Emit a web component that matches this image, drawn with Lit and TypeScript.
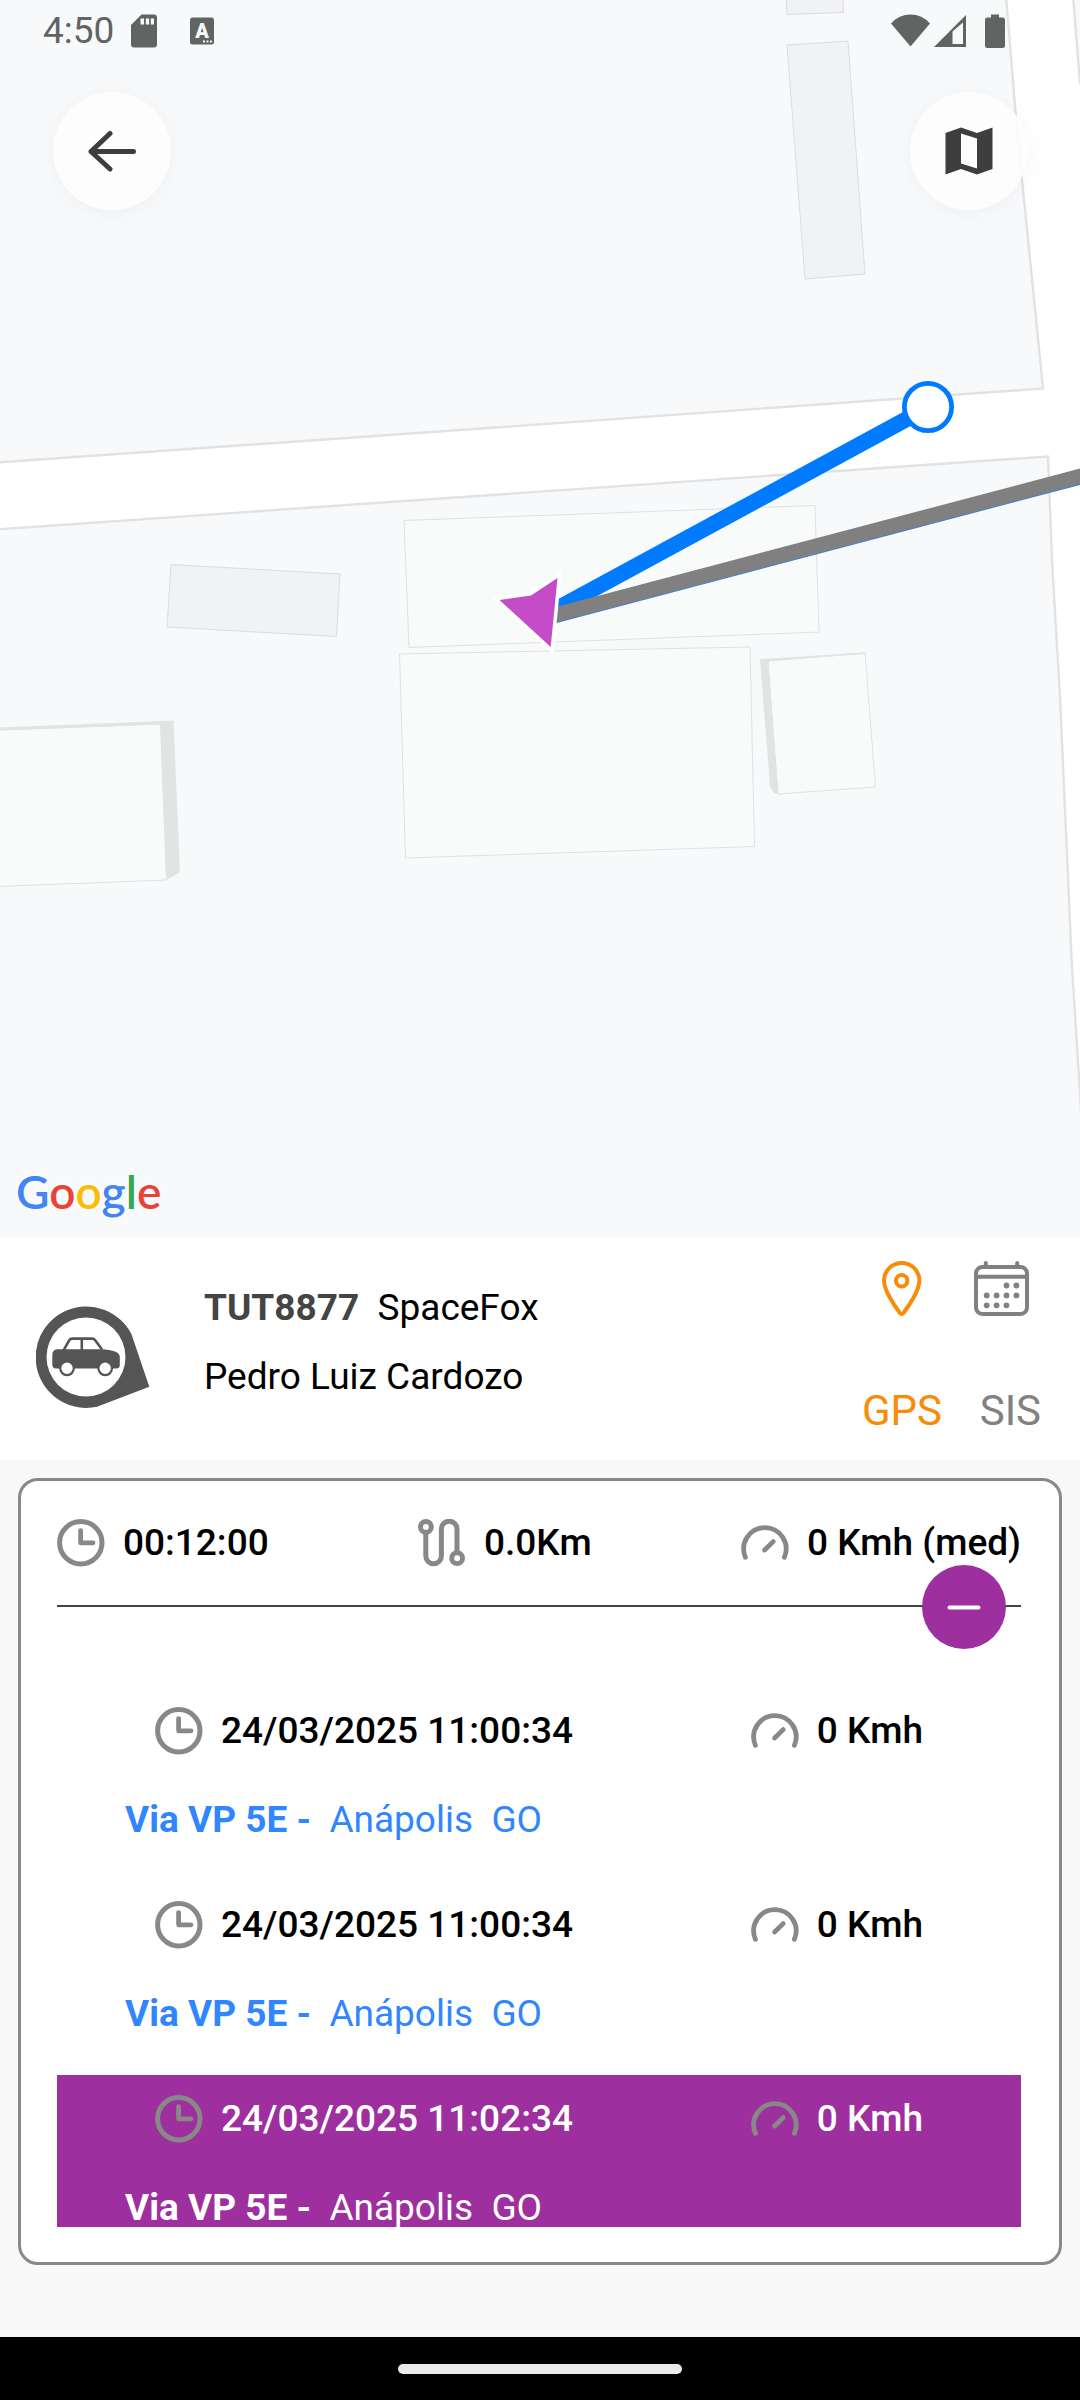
import { LitElement, html, svg, css, nothing } from "lit";
import { customElement, property, state } from "lit/decorators.js";
import { classMap } from "lit/directives/class-map.js";

interface Position {
  time: string;
  speed: string;
  street: string;
  city: string;
  active: boolean;
}

const clockIcon = html`<svg class="icon" viewBox="0 0 48 48" aria-hidden="true">
  <g fill="none" stroke="#888" stroke-linecap="round" stroke-linejoin="round">
    <circle cx="23.8" cy="23.8" r="21.2" stroke-width="5" />
    <path d="M23.6 11.6V23.8H36" stroke-width="4.8" />
  </g>
</svg>`;

const routeIcon = html`<svg class="icon" viewBox="0 0 48 48" aria-hidden="true">
  <g fill="none" stroke="#888" stroke-width="5">
    <circle cx="7.9" cy="7.9" r="5.4" />
    <circle cx="39.1" cy="39.2" r="5.4" />
    <path d="M7.8 13.5V37A7.8 7.8 0 0 0 23.4 37V10A7.8 7.8 0 0 1 39 10V33.5" />
  </g>
</svg>`;

const gaugeIcon = html`<svg class="icon" viewBox="0 0 48 48" aria-hidden="true">
  <g fill="none" stroke="#888" stroke-width="4.8" stroke-linecap="round">
    <path d="M4.4 38.2A21.2 21.2 0 1 1 43.4 38.2" />
    <path d="M23.6 31L32.2 22.6" />
  </g>
</svg>`;

/* One reading: an icon followed by its value. */
@customElement("trip-stat")
export class TripStat extends LitElement {
  @property() kind: "time" | "distance" | "speed" = "time";

  static styles = css`
    :host {
      display: flex;
      align-items: center;
      gap: 18px;
      line-height: 44px;
      font-weight: 500;
      white-space: nowrap;
    }
    .icon {
      display: block;
      width: 48px;
      height: 48px;
      flex: none;
    }
  `;

  render() {
    const icons = { time: clockIcon, distance: routeIcon, speed: gaugeIcon };
    return html`${icons[this.kind]}<span><slot></slot></span>`;
  }
}

/* Street map with the travelled route and the vehicle's heading marker. */
@customElement("route-map")
export class RouteMap extends LitElement {
  static styles = css`
    :host {
      display: block;
      background: #f8f9fb;
    }
    .canvas {
      display: block;
      width: 100%;
      height: 100%;
    }
  `;

  private buildings = svg`
    <g fill="#f1f2f4" stroke="#dcdcdc" stroke-width="1">
      <path d="M786 -2L787 14.5L843.500 12.500L843 -2Z" />
      <path d="M787 45L848 41L865 274L805 279Z" />
      <path d="M171 564.500L340 574L336.500 636.500L167 627Z" />
    </g>
    <g fill="#f9fbfb" stroke="#e0e0e0" stroke-width="1">
      <path d="M404 520.500L815 505.500L819 632L409 647.500Z" />
      <path d="M399.500 654L750 647L754.500 846.500L405.500 858Z" />
      <path d="M768 661L865 653L875.500 787L778 794Z" />
      <path d="M-2 730L160.500 724L166.500 880L-2 886.500Z" />
    </g>
    <g fill="#e2e3e3">
      <path d="M760 659L865 652.500L865 654L768 661L778 794L774 793L770 786Z" />
      <path d="M0 727.500L173.500 720.500L180 872L166.500 880L160.500 724.500L0 730.500Z" />
    </g>`;

  render() {
    return html`<svg class="canvas" viewBox="0 0 1080 1237" preserveAspectRatio="xMidYMid slice" role="img" aria-label="Mapa do trajeto">
      <rect width="1080" height="1237" fill="#ffffff" />
      <g fill="#f8f9fb" stroke="#e2e2e3" stroke-width="2.4">
        <path d="M-4 -4H1006L1017 130L1043 388.500L460 430L-4 462.500Z" />
        <path d="M-4 529.500L390 502L1048 456.500L1052 560L1060 697L1072 967L1080 1093L1088 1242H-4Z" />
        <path d="M1073 -4L1080 83L1090 90V-4Z" />
      </g>
      ${this.buildings}
      <path d="M552 611.500L928 407.500" stroke="#007bff" stroke-width="16" />
      <path d="M552 616.500L1090 474.500" stroke="#2f7fe0" stroke-width="15" />
      <path d="M552 615.700L1090 473.700" stroke="#808080" stroke-width="15" />
      <circle cx="928" cy="407" r="23.600" fill="#ffffff" stroke="#007bff" stroke-width="4.800" />
      <path d="M499.500 600L531 595.500L557.500 578L550.700 647Z" fill="#c44cc8" stroke="#ffffff" stroke-width="7" paint-order="stroke" />
    </svg>`;
  }
}

@customElement("app-root")
export class AppRoot extends LitElement {
  @state() private expanded = true;

  private positions: Position[] = [
    { time: "24/03/2025 11:00:34", speed: "0 Kmh", street: "Via VP 5E - ", city: " Anápolis  GO", active: false },
    { time: "24/03/2025 11:00:34", speed: "0 Kmh", street: "Via VP 5E - ", city: " Anápolis  GO", active: false },
    { time: "24/03/2025 11:02:34", speed: "0 Kmh", street: "Via VP 5E - ", city: " Anápolis  GO", active: true },
  ];

  static styles = css`
    :host {
      display: flex;
      flex-direction: column;
      min-height: 100vh;
      background: #f8f8f8;
      color: #000;
      font-family: Roboto, "Liberation Sans", sans-serif;
      font-size: 37px;
      line-height: 44px;
    }
    button {
      margin: 0;
      padding: 0;
      border: 0;
      background: none;
      color: inherit;
      font: inherit;
      cursor: pointer;
    }
    svg {
      display: block;
      flex: none;
    }

    .stage {
      position: relative;
      flex: 1 0 auto;
      display: flex;
      flex-direction: column;
      min-height: 480px;
    }
    .backdrop {
      position: absolute;
      inset: 0;
    }
    .status {
      position: relative;
      display: flex;
      align-items: center;
      justify-content: space-between;
      padding: 9px 75px 0 43px;
      color: #606462;
    }
    .status-group {
      display: flex;
      align-items: center;
    }
    .sd {
      margin-left: 17px;
    }
    .keyboard {
      margin-left: 33px;
    }
    .signal {
      margin-left: 4px;
    }
    .battery {
      margin-left: 19px;
    }
    .map-actions {
      position: relative;
      display: flex;
      justify-content: space-between;
      padding: 39px 52px 0 53px;
    }
    .round {
      display: grid;
      place-items: center;
      width: 118px;
      height: 118px;
      border-radius: 50%;
      background: rgba(253, 253, 253, 0.9);
      box-shadow: 0 3px 22px rgba(0, 0, 0, 0.04);
      color: #3e3e3e;
    }
    .wordmark {
      position: relative;
      margin: auto 0 19px 16px;
      font-family: Lato, "Liberation Sans", sans-serif;
      font-size: 46px;
      line-height: 52px;
      font-weight: 600;
      text-shadow: 0 0 4px #fff, 0 0 4px #fff;
    }
    .g-blue {
      color: #4285f4;
    }
    .g-red {
      color: #ea4335;
    }
    .g-yellow {
      color: #fbbc05;
    }
    .g-green {
      color: #34a853;
    }

    .vehicle {
      display: flex;
      align-items: flex-start;
      padding: 24px 39px 25px 36px;
      background: #fff;
    }
    .vehicle-icon {
      margin-top: 45px;
    }
    .vehicle-text {
      flex: 1;
      display: flex;
      flex-direction: column;
      gap: 25px;
      margin: 25px 0 0 53px;
      white-space: pre;
    }
    .plate {
      font-weight: 700;
      color: #444;
    }
    .sources {
      display: flex;
      flex-direction: column;
      gap: 70px;
      font-size: 42px;
      line-height: 49px;
    }
    .source-icons,
    .source-labels {
      display: flex;
      justify-content: space-between;
    }
    .source-icons {
      padding: 0 12px;
      gap: 45px;
    }
    .source-labels {
      gap: 36px;
    }
    .on {
      color: #fa8a0a;
    }
    .off {
      color: #818181;
    }

    .trip {
      margin: 18px 18px 72px;
      padding: 38px 38px 35px 36px;
      border: 3px solid #888;
      border-radius: 20px;
      background: #fff;
    }
    .summary {
      display: flex;
      justify-content: space-between;
    }
    .divider {
      position: relative;
      height: 2px;
      margin: 38px 0 80px;
      background: #444;
    }
    .toggle {
      position: absolute;
      right: 15px;
      top: -40px;
      display: grid;
      place-items: center;
      width: 84px;
      height: 84px;
      border-radius: 50%;
      background: #9e2f9e;
      color: #fff;
    }
    .positions {
      margin: 0;
      padding: 0;
      list-style: none;
      max-height: 540px;
      overflow-y: auto;
      scrollbar-width: none;
    }
    .position {
      padding: 20px 0 39px;
    }
    .position.active {
      background: #9e2f9e;
      color: #fff;
    }
    .reading {
      display: flex;
      justify-content: space-between;
      padding: 0 98px;
    }
    .address {
      margin-top: 43px;
      padding-left: 68px;
      white-space: pre;
      color: #2f86ff;
    }
    .active .address {
      color: #fff;
    }
    .street {
      font-weight: 700;
    }

    .navbar {
      display: grid;
      place-items: center;
      height: 63px;
      background: #000;
    }
    .handle {
      width: 284px;
      height: 10px;
      border-radius: 5px;
      background: #ebebeb;
    }
  `;

  private renderStatus() {
    return html`<div class="status">
      <div class="status-group">
        <span>4:50</span>
        <svg class="sd" width="26" height="34" viewBox="0 0 26 34" fill="currentColor" aria-hidden="true">
          <path d="M10.500 0.500H23Q26 0.500 26 3.500V30.500Q26 33.500 23 33.500H3Q0 33.500 0 30.500V11Z" />
          <path d="M9.500 4.500h3.500v6h-3.500zM14.800 4.500h3.300v6h-3.300zM19.800 4.500h3.200v6h-3.200z" fill="#f8f9fb" />
        </svg>
        <svg class="keyboard" width="24" height="28" viewBox="0 0 24 28" aria-hidden="true">
          <rect y="0.500" width="24" height="27" rx="2.500" fill="currentColor" />
          <text x="12" y="20.500" text-anchor="middle" font-family="Roboto, sans-serif" font-size="20" font-weight="900" fill="#f8f9fb">A</text>
          <path d="M13 23.500h2v2h-2zM16.500 23.500h2v2h-2zM20 23.500h2v2h-2z" fill="#f8f9fb" />
        </svg>
      </div>
      <div class="status-group">
        <svg width="39" height="34" viewBox="0 0 39 34" fill="currentColor" aria-hidden="true">
          <path d="M19.500 32.500L0 9.500Q8 0.500 19.500 0.500T39 9.500Z" />
        </svg>
        <svg class="signal" width="32" height="34" viewBox="0 0 32 34" fill="currentColor" aria-hidden="true">
          <path fill-rule="evenodd" d="M0 33L32 1V33ZM18.500 17.500V30H29V8.500Z" />
        </svg>
        <svg class="battery" width="20" height="34" viewBox="0 0 20 34" fill="currentColor" aria-hidden="true">
          <path d="M6 0.500H14V3.500H17.500Q20 3.500 20 6V31.500Q20 34 17.500 34H2.500Q0 34 0 31.500V6Q0 3.500 2.500 3.500H6Z" />
        </svg>
      </div>
    </div>`;
  }

  private renderMapStage() {
    return html`<section class="stage">
      <route-map class="backdrop"></route-map>
      ${this.renderStatus()}
      <div class="map-actions">
        <button class="round" type="button" aria-label="Voltar">
          <svg width="48" height="42" viewBox="0 0 48 42" fill="none" stroke="currentColor" stroke-width="5" stroke-linecap="round" stroke-linejoin="round" aria-hidden="true">
            <path d="M22 3.500L3 21.500L22 39M3 21.500H45.500" />
          </svg>
        </button>
        <button class="round" type="button" aria-label="Tipo de mapa">
          <svg width="48" height="48" viewBox="0 0 48 48" fill="currentColor" aria-hidden="true">
            <path fill-rule="evenodd" d="M0.500 6L16 0.500L32 6L47.500 0.500V42L32 47.500L16 42L0.500 47.500ZM16 6.500V36.500L32 41.500V11.500Z" />
          </svg>
        </button>
      </div>
      <div class="wordmark"><span class="g-blue">G</span><span class="g-red">o</span><span class="g-yellow">o</span><span class="g-blue">g</span><span class="g-green">l</span><span class="g-red">e</span></div>
    </section>`;
  }

  private renderVehicle() {
    return html`<section class="vehicle">
      <svg class="vehicle-icon" width="115" height="102" viewBox="0 0 115 102" aria-hidden="true">
        <path d="M61 100.800A50.700 50.700 0 1 1 95.400 28L113.300 80.700Z" fill="#555" />
        <circle cx="50" cy="51" r="39.500" fill="#fff" />
        <path d="M27.500 44.500L33.300 34.200Q34.300 32.600 36.300 32.600H56Q58 32.600 59.200 34.200L66 43.500" fill="none" stroke="#555" stroke-width="2.600" />
        <path d="M45.800 32V46" stroke="#555" stroke-width="2.600" />
        <path d="M22 43.300H67Q83.800 44.500 83.800 51V59Q83.800 62.500 80 62.500H20Q16.300 62.500 16.300 58.500V49Q16.300 43.300 22 43.300Z" fill="#555" />
        <g fill="#fff" stroke="#555" stroke-width="2.200">
          <circle cx="31" cy="62.300" r="6.800" />
          <circle cx="69.200" cy="62.300" r="6.800" />
        </g>
      </svg>
      <div class="vehicle-text">
        <div><span class="plate">TUT8877</span>  SpaceFox</div>
        <div>Pedro Luiz Cardozo</div>
      </div>
      <div class="sources">
        <div class="source-icons">
          <button class="on" type="button" aria-label="Posição">
            <svg width="55" height="55" viewBox="-8 0 55 55" fill="none" stroke="currentColor" stroke-width="4" stroke-linejoin="round" aria-hidden="true">
              <path d="M19.700 2C29.500 2 37.400 9.800 37.400 19.500C37.400 29.500 26.500 45.500 21.500 52Q19.700 54 17.900 52C12.900 45.500 2 29.500 2 19.500C2 9.800 9.900 2 19.700 2Z" />
              <circle cx="19.700" cy="19.800" r="5.700" />
            </svg>
          </button>
          <button class="off" type="button" aria-label="Calendário">
            <svg width="55" height="55" viewBox="0 0 55 55" fill="currentColor" aria-hidden="true">
              <g fill="none" stroke="currentColor" stroke-width="4" stroke-linecap="round">
                <rect x="2" y="6" width="51" height="47" rx="6.500" />
                <path d="M2 15.700H53M11.800 2V5M43.200 2V5" />
              </g>
              ${[[32.5, 24.5], [42.4, 24.5], [12.7, 34.4], [22.6, 34.4], [32.5, 34.4], [42.4, 34.4], [12.7, 44.3], [22.6, 44.3], [32.5, 44.3]].map(
                ([x, y]) => svg`<circle cx=${x} cy=${y} r="2.900" />`
              )}
            </svg>
          </button>
        </div>
        <div class="source-labels">
          <button class="on" type="button">GPS</button>
          <button class="off" type="button">SIS</button>
        </div>
      </div>
    </section>`;
  }

  private renderPosition(p: Position) {
    return html`<li class=${classMap({ position: true, active: p.active })}>
      <div class="reading">
        <trip-stat kind="time">${p.time}</trip-stat>
        <trip-stat kind="speed">${p.speed}</trip-stat>
      </div>
      <div class="address"><span class="street">${p.street}</span>${p.city}</div>
    </li>`;
  }

  private renderTrip() {
    return html`<section class="trip">
      <div class="summary">
        <trip-stat kind="time">00:12:00</trip-stat>
        <trip-stat kind="distance">0.0Km</trip-stat>
        <trip-stat kind="speed">0 Kmh (med)</trip-stat>
      </div>
      <div class="divider">
        <button
          class="toggle"
          type="button"
          aria-label="Mostrar ou ocultar posições"
          aria-expanded=${this.expanded ? "true" : "false"}
          @click=${() => (this.expanded = !this.expanded)}
        >
          <svg width="34" height="34" viewBox="0 0 34 34" fill="none" stroke="currentColor" stroke-width="4" stroke-linecap="round" aria-hidden="true">
            <path d="M2.500 17.500H31.500" />
            ${this.expanded ? nothing : svg`<path d="M17 2.500V31.500" />`}
          </svg>
        </button>
      </div>
      ${this.expanded ? html`<ul class="positions">${this.positions.map((p) => this.renderPosition(p))}</ul>` : nothing}
    </section>`;
  }

  render() {
    return html`${this.renderMapStage()} ${this.renderVehicle()} ${this.renderTrip()}
      <div class="navbar"><div class="handle"></div></div>`;
  }
}
